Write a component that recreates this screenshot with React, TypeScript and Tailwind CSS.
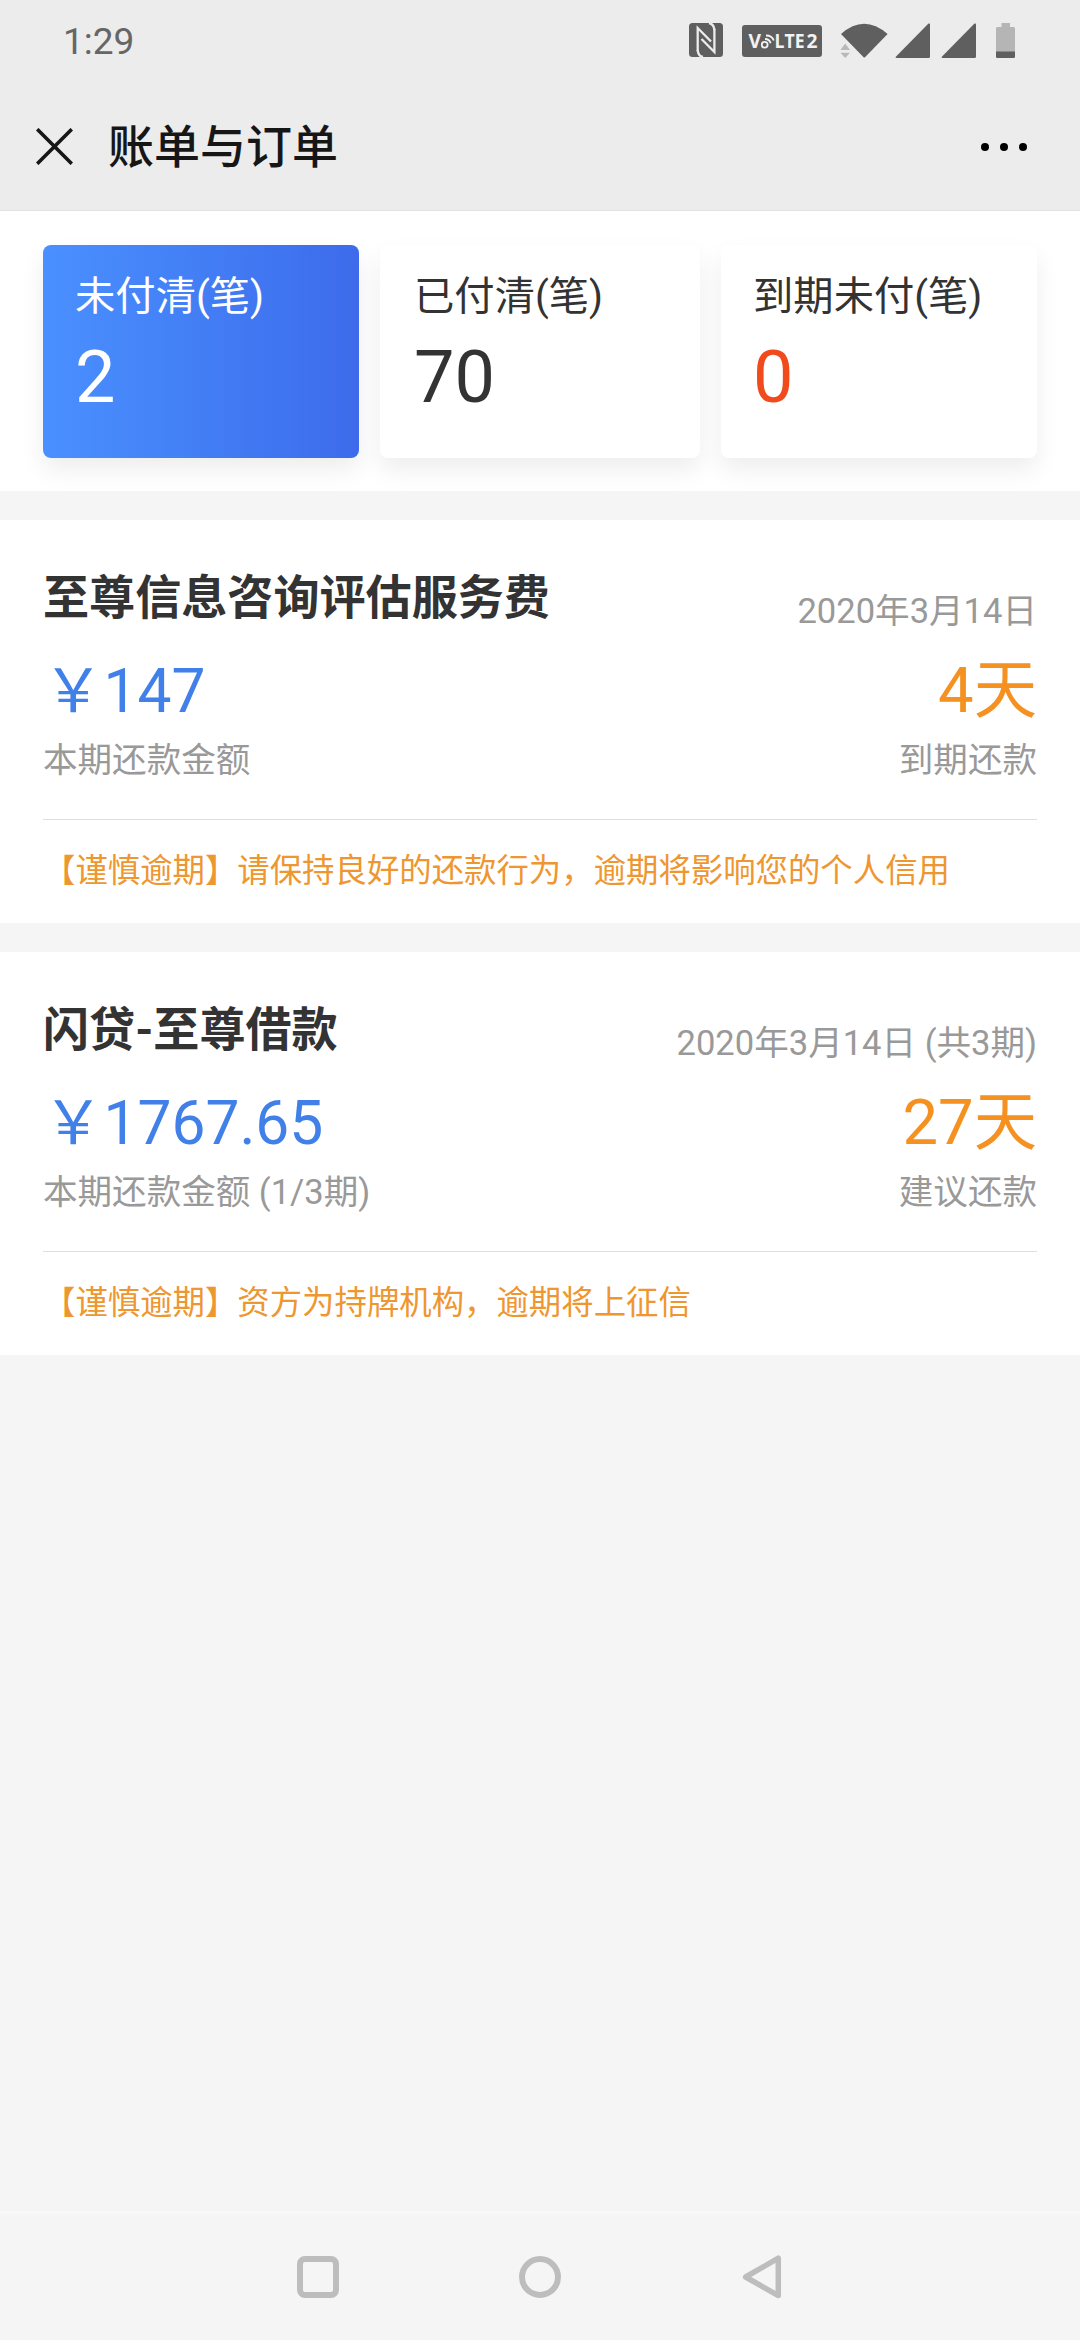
type Tab = { label: string; count: number; card: string; number: string };
type Bill = { id: string; title: string; date: string; amount: string; amountLabel: string; days: string; daysLabel: string; notice: string };

const TABS: Tab[] = [
  { label: "未付清(笔)", count: 2, card: "bg-linear-to-r from-[#4a90ff] to-[#3d6beb] text-white", number: "text-white" },
  { label: "已付清(笔)", count: 70, card: "bg-white text-[#333] pl-[34px]", number: "text-[#333]" },
  { label: "到期未付(笔)", count: 0, card: "bg-white text-[#333]", number: "text-[#f04a1d]" },
];

const BILLS: Bill[] = [
  { id: "fee", title: "至尊信息咨询评估服务费", date: "2020年3月14日", amount: "147", amountLabel: "本期还款金额", days: "4天", daysLabel: "到期还款", notice: "【谨慎逾期】请保持良好的还款行为，逾期将影响您的个人信用" },
  { id: "loan", title: "闪贷-至尊借款", date: "2020年3月14日 (共3期)", amount: "1767.65", amountLabel: "本期还款金额 (1/3期)", days: "27天", daysLabel: "建议还款", notice: "【谨慎逾期】资方为持牌机构，逾期将上征信" },
];

function SignalIcon() {
  return (
    <svg className="w-[35px] h-[35px]" viewBox="0 0 35 35" fill="#5f5f5f">
      <path d="M33.5 .6 Q35 0 35 1.6 V33.5 Q35 35 33.5 35 H1.6 Q0 35 .8 33.8Z" />
    </svg>
  );
}

function StatusBar() {
  return (
    <div className="h-[82px] pl-[63px] pr-[65px] flex items-center justify-between">
      <span className="text-[37px] leading-none text-[#666]">1:29</span>
      <div className="flex items-center -mt-[2px]">
        <svg className="w-[34px] h-[34px]" viewBox="0 0 34 34">
          <rect width="34" height="34" rx="3.5" fill="#5f5f5f" />
          <path d="M8.7 28 V5 L22 18.5 M12.5 16 L25.4 29 V6" fill="none" stroke="#ececec" strokeWidth="2.3" />
          <path d="M8.7 27 Q9 33 14 34 M25.4 7 Q25 1 20 0" fill="none" stroke="#ececec" strokeWidth="2.3" />
        </svg>
        <svg className="ml-[19px] mt-[1px] w-[80px] h-[32px]" viewBox="0 0 80 32">
          <rect width="80" height="32" rx="3" fill="#5f5f5f" />
          <g fill="#f2f2f2" fontFamily="'Open Sans', sans-serif" fontWeight="700" fontSize="19">
            <text x="6.5" y="23.3" textLength="12.5" lengthAdjust="spacingAndGlyphs">V</text>
            <text x="32.5" y="23.3" textLength="30" lengthAdjust="spacingAndGlyphs">LTE</text>
            <text x="64.5" y="23.3" textLength="11" lengthAdjust="spacingAndGlyphs">2</text>
          </g>
          <g fill="none" stroke="#f2f2f2" strokeWidth="1.8">
            <circle cx="22.7" cy="19.8" r="2.9" />
            <path d="M23 14 Q27.5 14 28.6 18.2 M24 10.5 Q30 10.5 31.8 15.5" />
          </g>
        </svg>
        <svg className="ml-[18px] w-[48px] h-[35px]" viewBox="0 0 48 35">
          <path d="M1 11 Q24 -9.5 47.6 11 L25 34.2 Q24.3 35 23.6 34.2Z" fill="#5f5f5f" />
          <path d="M5.2 20.5 L10 27 H.4Z M.4 29.8 H10 L5.2 35Z" fill="#b9b9b9" />
        </svg>
        <span className="ml-[7px]"><SignalIcon /></span>
        <span className="ml-[11px]"><SignalIcon /></span>
        <svg className="ml-[20px] w-[19px] h-[35px]" viewBox="0 0 19 35">
          <path d="M5.5 0 H14 V4 H17.5 Q19 4 19 5.5 V33.5 Q19 35 17.5 35 H1.5 Q0 35 0 33.5 V5.5 Q0 4 1.5 4 H5.5Z" fill="#b5b5b5" />
          <path d="M0 28.6 H19 V33.5 Q19 35 17.5 35 H1.5 Q0 35 0 33.5Z" fill="#5f5f5f" />
        </svg>
      </div>
    </div>
  );
}

function TitleBar() {
  return (
    <div className="h-[129px] pl-9 pr-[53px] flex items-center justify-between border-b border-[#e2e2e2]">
      <div className="flex items-center">
        <svg className="w-[37px] h-[37px]" viewBox="0 0 37 37"><path d="M1.2 1.2 L35.8 35.8 M35.8 1.2 L1.2 35.8" stroke="#161616" strokeWidth="3.6" /></svg>
        <h1 className="ml-[35px] pt-px text-[46px] leading-none font-medium text-[#161616]">账单与订单</h1>
      </div>
      <div className="pt-[2px] flex gap-[11px]">
        <i className="w-2 h-2 rounded-full bg-black" />
        <i className="w-2 h-2 rounded-full bg-black" />
        <i className="w-2 h-2 rounded-full bg-black" />
      </div>
    </div>
  );
}

function BillSection({ bill }: { bill: Bill }) {
  return (
    <section className="h-[403px] bg-white px-[43px] pt-[55px]">
      <div className="flex items-end justify-between h-[54px]">
        <h2 className="self-start text-[46.08px] leading-none font-bold text-[#333]">{bill.title}</h2>
        <span className="text-[34.56px] leading-none text-[#999]">{bill.date}</span>
      </div>
      <div className="mt-[30px] h-[63px] flex items-baseline justify-between leading-none">
        <span className="text-[60.48px] text-[#4080e8]">￥{bill.amount}</span>
        <span className="text-[63.36px] text-[#f59120]">{bill.days}</span>
      </div>
      <div className="mt-[21px] flex justify-between text-[34.56px] leading-[35px] text-[#999]">
        <span>{bill.amountLabel}</span>
        <span>{bill.daysLabel}</span>
      </div>
      <p className="mt-[41px] border-t border-[#dedede] pt-[35px] text-[32.4px] leading-none text-[#ee962f] whitespace-nowrap">{bill.notice}</p>
    </section>
  );
}

export default function App() {
  return (
    <div lang="zh-CN" className="w-[1080px] h-[2340px] flex flex-col overflow-hidden bg-[#f5f5f5] font-[Roboto,'Noto_Sans_CJK_SC',sans-serif]">
      <header className="bg-[#ececec]">
        <StatusBar />
        <TitleBar />
      </header>

      <main className="flex-1">
        <div className="h-[280px] bg-white px-[43px] pt-[34px] grid grid-cols-[316px_320px_316px] gap-[21px] items-start">
          {TABS.map(t => (
            <div key={t.label} className={`h-[213px] rounded-[8px] px-8 pt-8 shadow-[0_12px_24px_rgba(0,0,0,0.07)] ${t.card}`}>
              <p className="text-[40.32px] leading-[40px] whitespace-nowrap">{t.label}</p>
              <p className={`mt-[25px] text-[72px] leading-none ${t.number}`}>{t.count}</p>
            </div>
          ))}
        </div>
        <div className="pt-[29px] flex flex-col gap-[29px]">
          {BILLS.map(b => <BillSection key={b.id} bill={b} />)}
        </div>
      </main>

      <nav className="h-[129px] border-t-[3px] border-[#f8f8f8] pr-px flex items-center justify-center gap-[180px]">
        <svg className="w-[42px] h-[42px]" viewBox="0 0 42 42"><rect x="3" y="3" width="36" height="36" rx="5" fill="none" stroke="#bdbdbd" strokeWidth="6" /></svg>
        <svg className="w-[42px] h-[42px]" viewBox="0 0 42 42"><circle cx="21" cy="21" r="18" fill="none" stroke="#bdbdbd" strokeWidth="6" /></svg>
        <svg className="w-[42px] h-[44px]" viewBox="0 0 42 44"><path d="M37.3 3.2 V40.6 L4.6 22Z" fill="none" stroke="#bdbdbd" strokeWidth="5.5" strokeLinejoin="round" /></svg>
      </nav>
    </div>
  );
}
